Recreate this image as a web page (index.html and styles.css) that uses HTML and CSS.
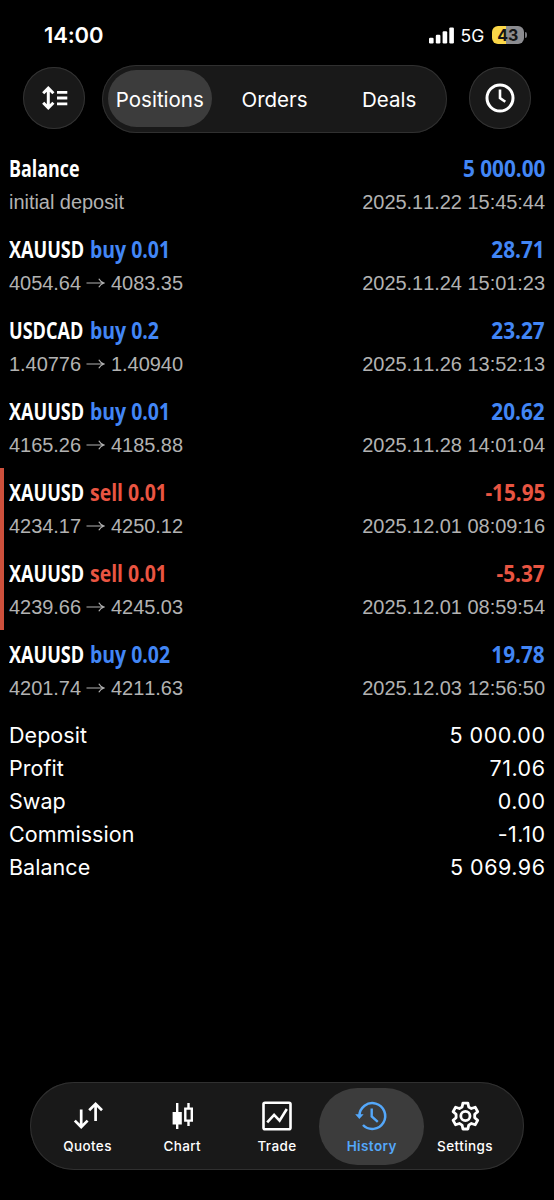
FILE: index.html
```html
<!DOCTYPE html>
<html lang="en">
<head>
<meta charset="utf-8">
<title>History</title>
<link rel="stylesheet" href="styles.css">
</head>
<body>
<svg class="defs" width="0" height="0"><symbol id="arrow" viewBox="0 0 19 12"><path d="M.5 6H17.5M12.8 1.8Q14.5 5 18 6Q14.5 7 12.8 10.2" fill="none" stroke="currentColor" stroke-width="1.2"/></symbol></svg>
<div class="screen">
  <header class="status">
    <span class="time">14:00</span>
    <div class="indicators">
      <svg class="signal" width="25" height="17" viewBox="0 0 25 17" fill="#fff"><rect x="0" y="10.7" width="4.6" height="5.8" rx="1.2"/><rect x="6.8" y="7.8" width="4.6" height="8.7" rx="1.2"/><rect x="13.6" y="4.2" width="4.6" height="12.3" rx="1.2"/><rect x="20.3" y=".4" width="4.6" height="16.1" rx="1.2"/></svg>
      <span class="network">5G</span>
      <div class="battery"><span>43</span></div><i class="tip"></i>
    </div>
  </header>
  <div class="toolbar">
    <button class="round"><svg width="62" height="62" viewBox="0 0 62 62" fill="none" stroke="#fff"><path d="M25.3 21.5V40.5M20.2 26.3L25.3 21.2L30.4 26.3M20.2 35.7L25.3 40.8L30.4 35.7" stroke-width="3"/><path d="M34 25.3H44.3M34 31H44.3M34 36.8H44.3" stroke-width="2.8"/></svg></button>
    <nav class="tabs"><span class="tab on">Positions</span><span class="tab orders">Orders</span><span class="tab deals">Deals</span></nav>
    <button class="round"><svg width="62" height="62" viewBox="0 0 62 62" fill="none" stroke="#fff" stroke-width="3"><circle cx="31" cy="31" r="13"/><path d="M31 22.5V31L36.3 34.8" stroke-width="2.6"/></svg></button>
  </div>
  <main class="list">
    <section class="row"><div class="line"><b class="name">Balance</b><b class="amount">5 000.00</b></div><div class="sub"><span>initial deposit</span><span>2025.11.22 15:45:44</span></div></section>
    <section class="row"><div class="line"><b class="sym">XAUUSD</b><b class="op">buy 0.01</b><b class="amount">28.71</b></div><div class="sub"><span>4054.64<svg class="to"><use href="#arrow"/></svg>4083.35</span><span>2025.11.24 15:01:23</span></div></section>
    <section class="row"><div class="line"><b class="sym">USDCAD</b><b class="op">buy 0.2</b><b class="amount">23.27</b></div><div class="sub"><span>1.40776<svg class="to"><use href="#arrow"/></svg>1.40940</span><span>2025.11.26 13:52:13</span></div></section>
    <section class="row"><div class="line"><b class="sym">XAUUSD</b><b class="op">buy 0.01</b><b class="amount">20.62</b></div><div class="sub"><span>4165.26<svg class="to"><use href="#arrow"/></svg>4185.88</span><span>2025.11.28 14:01:04</span></div></section>
    <section class="row loss"><div class="line"><b class="sym">XAUUSD</b><b class="op">sell 0.01</b><b class="amount">-15.95</b></div><div class="sub"><span>4234.17<svg class="to"><use href="#arrow"/></svg>4250.12</span><span>2025.12.01 08:09:16</span></div></section>
    <section class="row loss"><div class="line"><b class="sym">XAUUSD</b><b class="op">sell 0.01</b><b class="amount">-5.37</b></div><div class="sub"><span>4239.66<svg class="to"><use href="#arrow"/></svg>4245.03</span><span>2025.12.01 08:59:54</span></div></section>
    <section class="row"><div class="line"><b class="sym">XAUUSD</b><b class="op">buy 0.02</b><b class="amount">19.78</b></div><div class="sub"><span>4201.74<svg class="to"><use href="#arrow"/></svg>4211.63</span><span>2025.12.03 12:56:50</span></div></section>
    <dl class="summary">
      <div><dt>Deposit</dt><dd>5 000.00</dd></div>
      <div><dt>Profit</dt><dd>71.06</dd></div>
      <div><dt>Swap</dt><dd>0.00</dd></div>
      <div><dt>Commission</dt><dd>-1.10</dd></div>
      <div><dt>Balance</dt><dd>5 069.96</dd></div>
    </dl>
  </main>
  <nav class="dock">
    <a class="item"><svg viewBox="0 0 32 32" fill="none" stroke="currentColor" stroke-width="2.7"><path d="M9.2 8.5V25.5M2.8 19.6L9.2 26L15.6 19.6M23.6 20V3M17.2 9.2L23.6 2.8L30 9.2"/></svg><span>Quotes</span></a>
    <a class="item"><svg viewBox="0 0 32 32" fill="none" stroke="currentColor"><path d="M11.2 2V28" stroke-width="2.4"/><path d="M6.6 11H15.8V23.5H6.6Z" fill="currentColor" stroke="none"/><path d="M22.5 2V7M22.5 20V25" stroke-width="2.4"/><path d="M19.3 7.6H25.8V19.6H19.3Z" stroke-width="2.4"/></svg><span>Chart</span></a>
    <a class="item"><svg viewBox="0 0 32 32" fill="none" stroke="currentColor" stroke-width="2.6"><rect x="2.5" y="1.8" width="27" height="26.5" rx="1.5"/><path d="M6.2 21.4L13.1 13.8L18.6 19.6L25.8 8" stroke-width="2.6"/></svg><span>Trade</span></a>
    <a class="item on"><svg viewBox="0 0 32 32" fill="none" stroke="currentColor" stroke-width="2.5"><path d="M3.4 15A12.9 12.9 0 1 1 7 24"/><path d="M-.8 13.2H7.6L3.4 18Z" fill="currentColor" stroke="none"/><path d="M15.7 7.5V15.4L21.8 20.8" stroke-width="2.4"/></svg><span>History</span></a>
    <a class="item settings"><svg viewBox="0 0 32 32" fill="none" stroke="currentColor" stroke-width="2.8" stroke-linejoin="round"><path d="M13.9 2.1H18.9L19.7 6L22.4 7.5L26.2 6.2L28.7 10.6L25.7 13.3V16.7L28.7 19.4L26.2 23.8L22.4 22.5L19.7 24.1L18.9 28H13.9L13.1 24.1L10.4 22.5L6.6 23.8L4.1 19.4L7.1 16.7V13.3L4.1 10.6L6.6 6.2L10.4 7.5L13.1 6Z"/><circle cx="16.4" cy="15" r="4.6"/></svg><span>Settings</span></a>
  </nav>
</div>
</body>
</html>
```
FILE: styles.css
```css
* { box-sizing: border-box; }
body { margin: 0; background: #000; color: #fff; font-family: Inter, sans-serif; }
.defs { display: block; }
.screen { width: 554px; height: 1200px; display: flex; flex-direction: column; overflow: hidden; }

.status { height: 65px; padding: 23px 27px 0 44px; display: flex; justify-content: space-between; align-items: flex-start; }
.time { font-size: 22px; line-height: 25px; font-weight: 600; letter-spacing: -.15px; }
.indicators { display: flex; align-items: center; height: 24px; }
.network { font-size: 17.5px; line-height: 24px; margin: 1px 0 0 7px; width: 31px; letter-spacing: 0; }
.battery { width: 32.5px; height: 18px; border-radius: 6px; background: linear-gradient(90deg, #fbd748 43%, #8c8c90 43%); color: #151515; font-size: 16px; line-height: 18px; font-weight: 700; text-align: center; }
.tip { width: 2px; height: 6px; margin-left: 1px; border-radius: 0 3px 3px 0; background: #77777b; }

.toolbar { height: 68px; padding: 0 23px; display: flex; justify-content: space-between; align-items: center; }
.round { width: 62px; height: 62px; margin-top: -2px; padding: 0; border: 0; border-radius: 50%; background: #191919; box-shadow: inset 0 0 0 1px #333; }
.round svg { display: block; }
.tabs { width: 345px; height: 68px; margin-left: -5px; padding: 5px 6px; display: flex; border-radius: 34px; background: #191919; box-shadow: inset 0 0 0 1px #303030; }
.tab { width: 104px; height: 57px; display: flex; align-items: center; justify-content: center; padding-top: 2px; border-radius: 29px; font-size: 20.5px; letter-spacing: 0; }
.tab.on { background: #3c3c3c; }
.orders { margin-left: 11px; }
.deals { margin-left: 11px; }

.list { flex: 1; padding-top: 11px; }
.row { height: 81px; padding: 9px 9px 0; }
.line { height: 30px; display: flex; font: 700 24px/30px "Open Sans", sans-serif; white-space: nowrap; }
.line b { font-weight: 680; }
.name, .sym { width: 80.5px; transform: scaleX(.753); transform-origin: left; }
.name { transform: scaleX(.745); }
.op { width: 80px; color: #4286f5; transform: scaleX(.81); transform-origin: left; }
.amount { margin-left: auto; color: #4286f5; transform: scaleX(.865); transform-origin: right; }
.sub { display: flex; justify-content: space-between; margin-top: 7px; font: 20px/24px "Liberation Sans", sans-serif; font-kerning: none; letter-spacing: -.04px; color: #b2b2b2; }
.to { width: 19px; height: 12px; margin: 0 6px 1px 5px; }
.loss { box-shadow: inset 4px 0 #cd503c; }
.loss .op, .loss .amount { color: #e95542; }

.summary { margin: 8px 9px 0; font-size: 21.5px; line-height: 33.2px; }
.summary div { display: flex; justify-content: space-between; height: 33.1px; }
.summary dt { letter-spacing: .05px; }
.summary dd { margin: 0 -.5px 0 0; font-weight: 430; letter-spacing: .5px; }

.dock { width: 494px; height: 88px; margin: 0 0 30px 30px; padding: 6px 5px; display: flex; justify-content: space-between; border-radius: 44px; background: #191919; box-shadow: inset 0 0 0 1px #303030; }
.item { width: 105px; height: 77px; margin-right: -10.4px; padding-top: 13px; display: flex; flex-direction: column; align-items: center; border-radius: 38.5px; font-size: 13.5px; line-height: 18px; font-weight: 500; letter-spacing: .4px; }
.item.settings { margin-right: 0; padding-right: 3px; }
.item svg { width: 32px; height: 32px; margin-bottom: 4px; overflow: visible; }
.item.on { background: #3c3c3c; color: #54a8fb; font-weight: 600; }
```
